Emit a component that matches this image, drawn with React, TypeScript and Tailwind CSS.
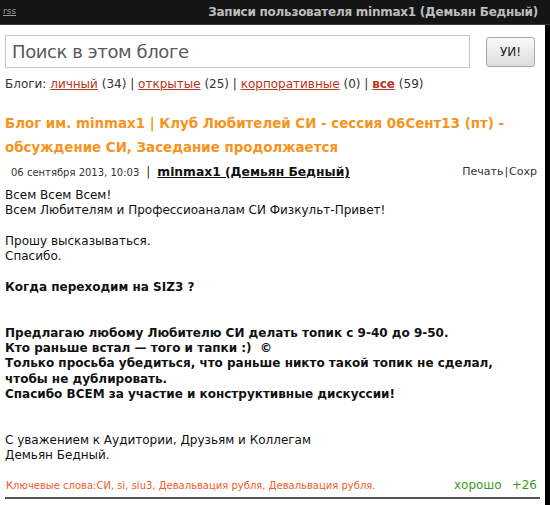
const font = { fontFamily: '"DejaVu Sans", Verdana, sans-serif' };

const Line = ({ children, bold }: { children?: React.ReactNode; bold?: boolean }) => (
  <div className={bold ? "font-bold" : ""}>{children ?? "\u00a0"}</div>
);

export default function App() {
  return (
    <div className="w-[550px] h-[505px] bg-black overflow-hidden" style={font}>
      <div className="h-[25px] bg-[#151515] border-b border-[#3a3a3a] flex items-center justify-between pl-[3px] pr-[12px]">
        <a className="text-[9px] text-[#9a9a9a] underline">rss</a>
        <span className="text-[12px] font-bold text-[#bdbdbd] tracking-[-0.25px]">
          Записи пользователя minmax1 (Демьян Бедный)
        </span>
      </div>
      <div className="w-[545px] h-[480px] bg-white pl-[5px] pr-[3px]">
        <div className="flex items-center pt-[10px]">
          <div className="w-[465px] h-[33px] border border-[#c8c8c8] flex items-center pl-[6px]">
            <span className="text-[18px] text-[#5a5a5a] tracking-[-0.4px]">Поиск в этом блоге</span>
          </div>
          <button className="ml-[16px] w-[49px] h-[30px] rounded-[3px] border border-[#a8a8a8] bg-gradient-to-b from-[#fafafa] to-[#dcdcdc] text-[12px] text-[#222]">
            УИ!
          </button>
        </div>
        <div className="mt-[9px] text-[12px] text-[#333] leading-[15px]">
          Блоги: <a className="underline text-[#b5361c]">личный</a> (34) |{" "}
          <a className="underline text-[#b5361c]">открытые</a> (25) |{" "}
          <a className="underline text-[#b5361c]">корпоративные</a> (0) |{" "}
          <a className="underline font-bold text-[#b5361c]">все</a> (59)
        </div>
        <h1 className="mt-[20px] text-[13.4px] leading-[24px] font-bold text-[#f7941d]">
          Блог им. minmax1 | Клуб Любителей СИ - сессия 06Сент13 (пт) -
          <br />
          обсуждение СИ, Заседание продолжается
        </h1>
        <div className="flex items-center justify-between mt-[2px] h-[20px] pr-[5px]">
          <div className="flex items-center pl-[6px]">
            <span className="text-[10px] text-[#333]">06 сентября 2013, 10:03</span>
            <span className="mx-[7px] text-[12px] text-[#333]">|</span>
            <a className="text-[12.3px] font-bold underline text-[#111]">minmax1 (Демьян Бедный)</a>
          </div>
          <div className="text-[11px] text-[#333]">
            Печать<span className="mx-[1px]">|</span>Сохр
          </div>
        </div>
        <div className="mt-[6px] text-[12px] leading-[15.3px] text-[#111]">
          <Line>Всем Всем Всем!</Line>
          <Line>Всем Любителям и Профессиоаналам СИ Физкульт-Привет!</Line>
          <Line />
          <Line>Прошу высказываться.</Line>
          <Line>Спасибо.</Line>
          <Line />
          <Line bold>Когда переходим на SIZ3 ?</Line>
          <Line />
          <Line />
          <Line bold>Предлагаю любому Любителю СИ делать топик с 9-40 до 9-50.</Line>
          <Line bold>Кто раньше встал — того и тапки :)&nbsp; ©</Line>
          <Line bold>Только просьба убедиться, что раньше никто такой топик не сделал,</Line>
          <Line bold>чтобы не дублировать.</Line>
          <Line bold>Спасибо ВСЕМ за участие и конструктивные дискуссии!</Line>
          <Line />
          <Line />
          <Line>С уважением к Аудитории, Друзьям и Коллегам</Line>
          <Line>Демьян Бедный.</Line>
        </div>
        <div className="mt-[13px] flex items-center justify-between pl-[1px] pr-[5px] h-[18px]">
          <span className="text-[10px] text-[#f25c2a]">
            Ключевые слова:СИ, si, siu3, Девальвация рубля, Девальвация рубля.
          </span>
          <span className="text-[12px] text-[#3c9a1a]">
            хорошо<span className="ml-[10px]">+26</span>
          </span>
        </div>
        <div className="mt-[3px] mr-[2px] h-[2px] bg-[#555]" />
      </div>
    </div>
  );
}
